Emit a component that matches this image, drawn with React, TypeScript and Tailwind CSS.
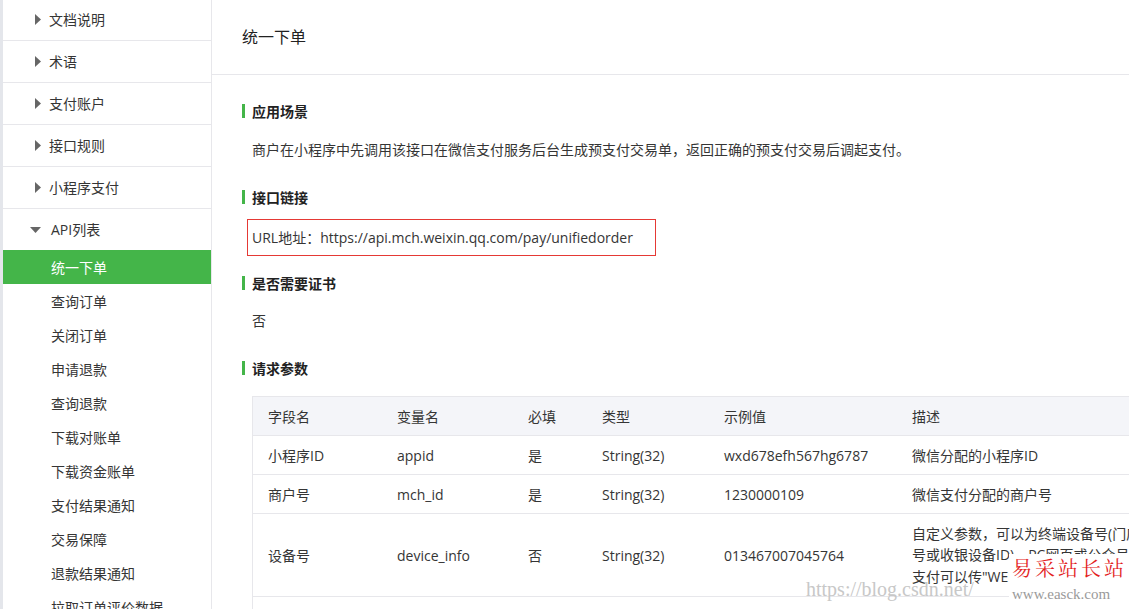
import React from "react";

const FONT = { fontFamily: '"Open Sans", "Noto Sans CJK SC", sans-serif' };

const topItems = ["文档说明", "术语", "支付账户", "接口规则", "小程序支付"];
const subItems = [
  "查询订单",
  "关闭订单",
  "申请退款",
  "查询退款",
  "下载对账单",
  "下载资金账单",
  "支付结果通知",
  "交易保障",
  "退款结果通知",
  "拉取订单评价数据",
];

function Heading({ children }: { children: React.ReactNode }) {
  return (
    <div className="flex items-center h-[20px]">
      <span className="w-[3px] h-[14px] bg-[#44b549]" />
      <span className="ml-[7px] font-bold text-[14px] text-[#222]">{children}</span>
    </div>
  );
}

const COLS = "grid grid-cols-[129px_131px_74px_122px_188px_1fr]";

const rows = [
  ["小程序ID", "appid", "是", "String(32)", "wxd678efh567hg6787", "微信分配的小程序ID"],
  ["商户号", "mch_id", "是", "String(32)", "1230000109", "微信支付分配的商户号"],
];

export default function App() {
  return (
    <div
      className="w-[1129px] h-[609px] overflow-hidden bg-white flex items-start text-[14px] text-[#353535] relative"
      style={FONT}
    >
      {/* sidebar */}
      <div className="w-[212px] h-[609px] shrink-0 flex border-r border-[#e7e7eb]">
        <div className="w-[3px] bg-[#e4e6eb] shrink-0" />
        <div className="flex-1 -mt-[1px]">
          {topItems.map((t) => (
            <div key={t} className="h-[42px] border-b border-[#e7e7eb] flex items-center pl-[32px]">
              <svg width="6" height="11" viewBox="0 0 6 11" className="mr-[8px]">
                <path d="M0 0 L6 5.5 L0 11 Z" fill="#666" />
              </svg>
              <span>{t}</span>
            </div>
          ))}
          <div className="h-[41px] flex items-center pl-[27px]">
            <svg width="11" height="6" viewBox="0 0 11 6" className="mr-[10px]">
              <path d="M0 0 L11 0 L5.5 6 Z" fill="#666" />
            </svg>
            <span>API列表</span>
          </div>
          <div className="h-[34px] bg-[#44b549] text-white flex items-center pl-[48px]">统一下单</div>
          {subItems.map((t) => (
            <div key={t} className="h-[34px] flex items-center pl-[48px] whitespace-nowrap">
              {t}
            </div>
          ))}
        </div>
      </div>

      {/* main */}
      <div className="flex-1 min-w-0">
        <div className="h-[75px] border-b border-[#e7e7eb] flex items-center pl-[30px] text-[16px] text-[#222]">
          <span className="-mt-[1px]">统一下单</span>
        </div>
        <div className="pl-[30px] pt-[26px]">
          <Heading>应用场景</Heading>
          <div className="pl-[10px] mt-[19px] h-[20px] leading-[20px] whitespace-nowrap">
            商户在小程序中先调用该接口在微信支付服务后台生成预支付交易单，返回正确的预支付交易后调起支付。
          </div>
          <div className="mt-[27px]">
            <Heading>接口链接</Heading>
          </div>
          <div className="mt-[12px] ml-[5px] w-[409px] h-[37px] border border-[#e53935] flex items-center pl-[4px] whitespace-nowrap">
            URL地址：https://api.mch.weixin.qq.com/pay/unifiedorder
          </div>
          <div className="mt-[17px]">
            <Heading>是否需要证书</Heading>
          </div>
          <div className="pl-[10px] mt-[18px] h-[20px] leading-[20px]">否</div>
          <div className="mt-[27px]">
            <Heading>请求参数</Heading>
          </div>
          <div className="mt-[18px] ml-[10px] w-[1000px] border border-[#e7e7eb]">
            <div className={`${COLS} h-[39px] bg-[#f4f5f9] border-b border-[#e7e7eb] items-center`}>
              {["字段名", "变量名", "必填", "类型", "示例值", "描述"].map((h) => (
                <div key={h} className="pl-[15px]">{h}</div>
              ))}
            </div>
            {rows.map((r) => (
              <div key={r[0]} className={`${COLS} h-[39px] border-b border-[#e7e7eb] items-center`}>
                {r.map((c, i) => (
                  <div key={i} className="pl-[15px] whitespace-nowrap">{c}</div>
                ))}
              </div>
            ))}
            <div className={`${COLS} h-[83px] border-b border-[#e7e7eb] items-center`}>
              <div className="pl-[15px]">设备号</div>
              <div className="pl-[15px]">device_info</div>
              <div className="pl-[15px]">否</div>
              <div className="pl-[15px]">String(32)</div>
              <div className="pl-[15px]">013467007045764</div>
              <div className="pl-[15px] w-[253px] leading-[21.5px]">
                自定义参数，可以为终端设备号(门店号或收银设备ID)，PC网页或公众号内支付可以传"WEB"
              </div>
            </div>
            <div className="h-[40px]" />
          </div>
        </div>
      </div>

      {/* watermark */}
      <div
        className="absolute left-[806px] top-[577px] text-[20px] leading-[24px] text-[#c8c8c8] whitespace-nowrap"
        style={{ fontFamily: '"Liberation Serif", serif' }}
      >
        https://blog.csdn.net/
      </div>
      <div className="absolute left-[1009px] top-[554px] w-[120px] h-[55px] bg-white pl-[3px] overflow-hidden">
        <div
          className="text-[20px] leading-[28px] text-[#e31d1d] tracking-[3px] whitespace-nowrap"
          style={{ fontFamily: '"Noto Serif CJK SC", "Noto Sans CJK SC", serif' }}
        >
          易采站长站
        </div>
        <div
          className="text-[15px] leading-[20px] text-[#9a9a9a] whitespace-nowrap mt-[2px]"
          style={{ fontFamily: '"Liberation Serif", serif' }}
        >
          www.easck.com
        </div>
      </div>
    </div>
  );
}
